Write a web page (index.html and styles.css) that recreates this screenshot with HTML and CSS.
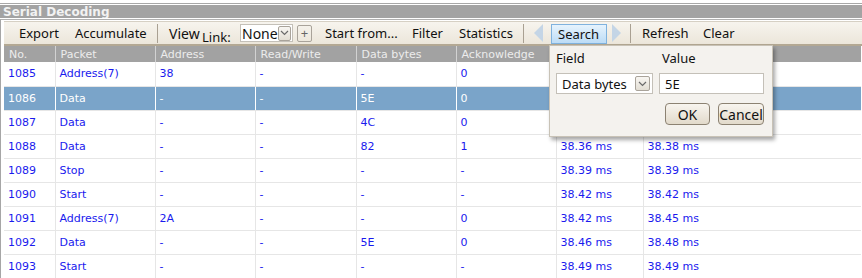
FILE: index.html
```html
<!DOCTYPE html>
<html lang="en">
<head>
    <meta charset="UTF-8">
    <title>Serial Decoding</title>
    <link rel="stylesheet" href="styles.css">
</head>
<body>
    <div class="window">
        <div class="caption">Serial Decoding</div>
        <div class="panel">
            <div class="toolbar">
                <span class="tool export">Export</span>
                <span class="tool accumulate">Accumulate</span>
                <span class="sep"></span>
                <span class="view">View</span>
                <span class="link">Link:</span>
                <span class="combo">None<span class="drop"><svg width="9" height="6" viewBox="0 0 9 6"><path d="M1 1 L4.5 4.5 L8 1" fill="none" stroke="#6a6a6a" stroke-width="1.2"/></svg></span></span>
                <span class="plus">+</span>
                <span class="tool start">Start from...</span>
                <span class="tool filter">Filter</span>
                <span class="tool stats">Statistics</span>
                <span class="sep"></span>
                <span class="arrow left"></span>
                <span class="tool active">Search</span>
                <span class="arrow right"></span>
                <span class="sep"></span>
                <span class="tool refresh">Refresh</span>
                <span class="tool">Clear</span>
            </div>
            <table class="grid">
                <colgroup>
                    <col style="width:51px">
                    <col style="width:100px">
                    <col style="width:100px">
                    <col style="width:101px">
                    <col style="width:100px">
                    <col style="width:100px">
                    <col style="width:87px">
                    <col>
                </colgroup>
                <thead>
                    <tr><th>No.</th><th>Packet</th><th>Address</th><th>Read/Write</th><th>Data bytes</th><th>Acknowledge</th><th></th><th></th></tr>
                </thead>
                <tbody>
                    <tr><td>1085</td><td>Address(7)</td><td>38</td><td>-</td><td>-</td><td>0</td><td></td><td></td></tr>
                    <tr class="selected"><td>1086</td><td>Data</td><td>-</td><td>-</td><td>5E</td><td>0</td><td></td><td></td></tr>
                    <tr><td>1087</td><td>Data</td><td>-</td><td>-</td><td>4C</td><td>0</td><td></td><td></td></tr>
                    <tr><td>1088</td><td>Data</td><td>-</td><td>-</td><td>82</td><td>1</td><td>38.36 ms</td><td>38.38 ms</td></tr>
                    <tr><td>1089</td><td>Stop</td><td>-</td><td>-</td><td>-</td><td>-</td><td>38.39 ms</td><td>38.39 ms</td></tr>
                    <tr><td>1090</td><td>Start</td><td>-</td><td>-</td><td>-</td><td>-</td><td>38.42 ms</td><td>38.42 ms</td></tr>
                    <tr><td>1091</td><td>Address(7)</td><td>2A</td><td>-</td><td>-</td><td>0</td><td>38.42 ms</td><td>38.45 ms</td></tr>
                    <tr><td>1092</td><td>Data</td><td>-</td><td>-</td><td>5E</td><td>0</td><td>38.46 ms</td><td>38.48 ms</td></tr>
                    <tr><td>1093</td><td>Start</td><td>-</td><td>-</td><td>-</td><td>-</td><td>38.49 ms</td><td>38.49 ms</td></tr>
                </tbody>
            </table>
        </div>

        <!-- popup de busca -->
        <div class="search-pop">
            <div class="pop-labels">
                <span class="lbl-field">Field</span>
                <span>Value</span>
            </div>
            <div class="pop-inputs">
                <span class="select">Data bytes<span class="drop"><svg width="9" height="6" viewBox="0 0 9 6"><path d="M1 1 L4.5 4.5 L8 1" fill="none" stroke="#6a6a6a" stroke-width="1.2"/></svg></span></span>
                <span class="input">5E</span>
            </div>
            <div class="pop-buttons">
                <button class="btn ok">OK</button>
                <button class="btn cancel">Cancel</button>
            </div>
        </div>
    </div>
</body>
</html>
```

FILE: styles.css
```css
/* Estilo geral */
* {
    margin: 0;
    padding: 0;
    box-sizing: border-box;
}

body {
    background-color: #fff;
    overflow: hidden;
    font-family: "Noto Sans", sans-serif;
}

.window {
    position: relative;
    margin-top: 3px;
    border-top: 1px solid #a8a8a8;
    padding-top: 1px;
}

.caption {
    height: 13px;
    background-color: #a3a3a3;
    color: #f2f2f2;
    font: bold 12px "DejaVu Sans", sans-serif;
    line-height: 14px;
    padding-left: 3px;
    overflow: hidden;
}

.panel {
    margin-top: 1px;
    border-top: 1px solid #b0b0b0;
    border-left: 1px solid #a6a6a6;
    padding-left: 3px;
    padding-top: 1px;
}

/* Barra de ferramentas */
.toolbar {
    display: flex;
    align-items: center;
    height: 25px;
    padding-left: 15px;
    background: linear-gradient(#f7f4ee, #ece6da);
    border-top: 1px solid #d6d0c4;
    border-bottom: 2px solid #b3a893;
    font-size: 13px;
    color: #111;
}

.tool {
    flex: none;
    white-space: nowrap;
}

.tool.export { width: 56px; }
.tool.accumulate { width: 82px; }
.tool.start { width: 87px; }
.tool.filter { width: 47px; }
.tool.stats { width: 64px; }
.tool.refresh { width: 61px; }

.tool.active {
    width: 56px;
    height: 20px;
    line-height: 18px;
    padding-left: 6px;
    margin: 1px 5px 0 8px;
    border: 1px solid #7fb2de;
    background: linear-gradient(#e6f3fd, #bcdcf6);
}

.sep {
    flex: none;
    width: 1px;
    height: 19px;
    background-color: #a9a092;
    margin-right: 11px;
}

.view {
    width: 33px;
    font-size: 14px;
}

.link {
    width: 38px;
    font-size: 13px;
    margin-top: 8px;
}

.combo {
    display: flex;
    align-items: center;
    justify-content: space-between;
    width: 53px;
    height: 18px;
    margin-right: 4px;
    padding: 0 1px 0 1px;
    background-color: #fff;
    border: 1px solid #c4c0b8;
    font-size: 14px;
}

.drop {
    display: flex;
    align-items: center;
    justify-content: center;
    width: 15px;
    height: 15px;
    border: 1px solid #a9a39a;
    border-radius: 2px;
    background: linear-gradient(#f8f6f2, #e3ded4);
}

.plus {
    display: flex;
    align-items: center;
    justify-content: center;
    width: 15px;
    height: 17px;
    margin-right: 13px;
    border: 1px solid #a9a39a;
    border-radius: 2px;
    color: #666;
    font-size: 13px;
}

.arrow {
    flex: none;
    width: 0;
    height: 0;
    border-top: 9px solid transparent;
    border-bottom: 9px solid transparent;
}

.arrow.left {
    border-right: 9px solid #c4d5e6;
    margin-left: -1px;
}

.arrow.right {
    border-left: 9px solid #c4d5e6;
    margin-right: 9px;
}

/* Tabela */
.grid {
    width: 857px;
    border-collapse: collapse;
    table-layout: fixed;
    font: 11px "DejaVu Sans", sans-serif;
}

.grid th {
    height: 16px;
    padding-left: 5px;
    text-align: left;
    font-weight: normal;
    color: #ececec;
    background-color: #a2a2a2;
    border-left: 1px solid #d2d2d2;
    white-space: nowrap;
}

.grid th:first-child,
.grid td:first-child {
    border-left: none;
}

.grid td {
    height: 24px;
    padding-left: 4px;
    color: #1a1aee;
    border-left: 1px solid #e6e6e6;
    border-bottom: 1px solid #e6e6e6;
    white-space: nowrap;
}

.grid tr.selected td {
    background-color: #7aa4c9;
    color: #fff;
    border-left-color: #fff;
}

/* Popup de busca */
.search-pop {
    position: absolute;
    left: 549px;
    top: 41px;
    width: 224px;
    height: 92px;
    padding: 3px 8px 0 6px;
    background-color: #f4f2ee;
    border: 1px solid #c8c2b6;
    box-shadow: 2px 3px 4px rgba(0, 0, 0, 0.35);
    font-size: 13px;
    color: #111;
}

.pop-labels {
    display: flex;
}

.lbl-field {
    width: 106px;
}

.pop-inputs {
    display: flex;
    gap: 6px;
    margin-top: 6px;
}

.select,
.input {
    display: flex;
    align-items: center;
    height: 21px;
    background-color: #fff;
    border: 1px solid #c4c0b8;
    padding: 0 2px 0 5px;
}

.select {
    width: 99px;
    justify-content: space-between;
}

.input {
    width: 107px;
}

.pop-buttons {
    display: flex;
    justify-content: flex-end;
    gap: 8px;
    margin-top: 9px;
}

.btn {
    height: 22px;
    padding: 0;
    font: 14px "Noto Sans", sans-serif;
    color: #111;
    border: 1px solid #8c8272;
    border-radius: 4px;
    background: linear-gradient(#f8f5ef, #e2dacb);
}

.btn.ok { width: 45px; }
.btn.cancel { width: 46px; }
```
